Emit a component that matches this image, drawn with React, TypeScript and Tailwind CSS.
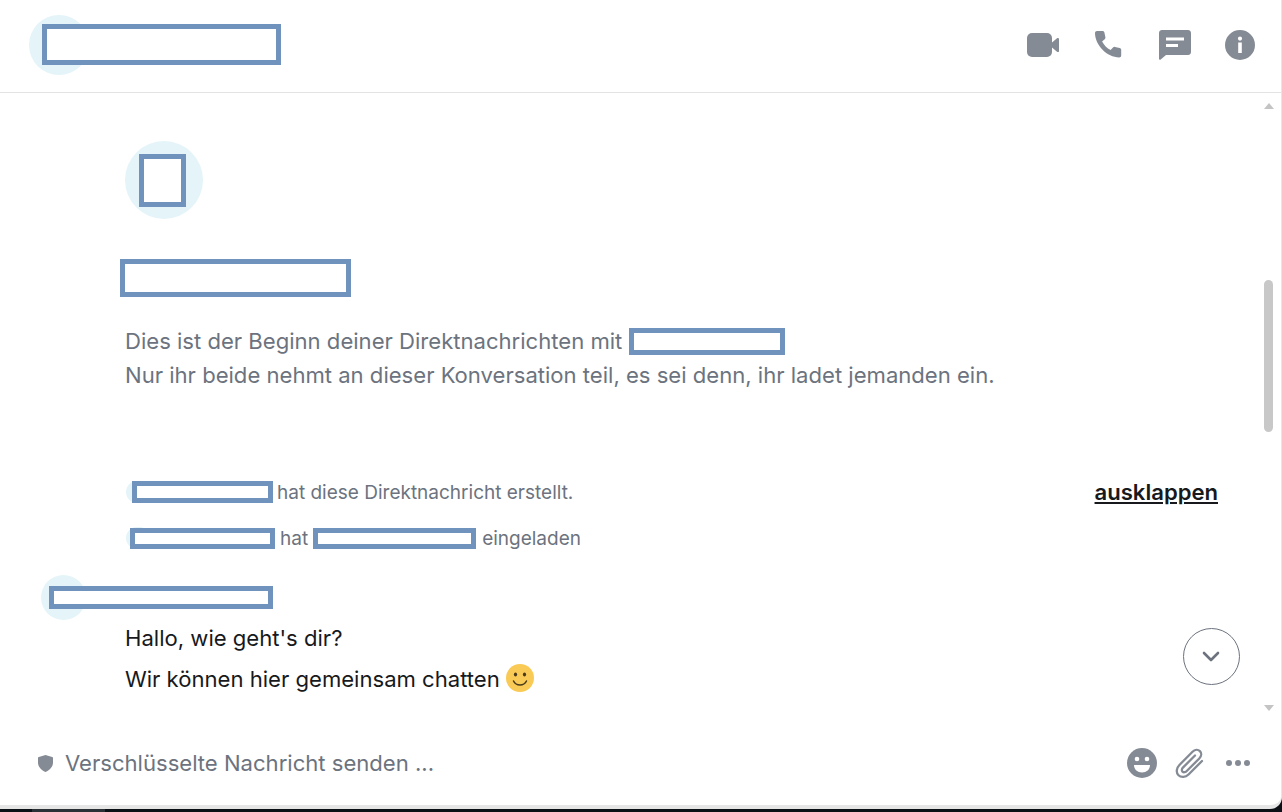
const redact = "border-[5px] border-[#7093bd] bg-white shrink-0";
const avatarBg = "rounded-full bg-[#e4f4f9] shrink-0";

function HeaderIcons() {
  return (
    <div className="flex items-center text-[#858b94]">
      <svg className="w-[32px] h-[24px]" viewBox="0 0 32 24" fill="currentColor">
        <rect x="0" y="0" width="25" height="24" rx="5" />
        <path d="M25 9.5 30 5.2c.8-.7 2-.2 2 .9v11.8c0 1.1-1.2 1.6-2 .9L25 14.500z" />
      </svg>
      <svg className="w-[30px] h-[30px] ml-[35px]" viewBox="0 0 30 30" fill="currentColor">
        <path d="M3 1h5.500c1 0 1.700.6 1.900 1.500l1 4.800c.2.8-.1 1.500-.7 2l-2.600 2.300c1.900 3.700 4.800 6.600 8.500 8.500l2.400-2.600c.6-.6 1.300-.8 2-.6l4.700 1c.9.2 1.500 1 1.500 1.900v5.600c0 1.200-.9 2-2 2C13.200 27.400 1 15.300 1 3c0-1.100.9-2 2-2z" />
      </svg>
      <svg className="w-[32px] h-[30px] ml-[35px]" viewBox="0 0 32 30" fill="currentColor">
        <path fillRule="evenodd" d="M3 0h26c1.700 0 3 1.300 3 3v19c0 1.700-1.300 3-3 3H7l-5.300 4.500c-.6.500-1.700.1-1.700-.8V3c0-1.700 1.300-3 3-3zm4 7.500v3h18v-3zm0 6.500v3h12v-3z" />
      </svg>
      <svg className="w-[30px] h-[30px] ml-[34px]" viewBox="0 0 30 30" fill="currentColor">
        <path fillRule="evenodd" d="M15 0a15 15 0 1 1 0 30a15 15 0 0 1 0-30zm-1.800 12.500v10.500h3.600V12.500zM15 6.500a2.100 2.100 0 1 0 0 4.200a2.100 2.100 0 0 0 0-4.200z" />
      </svg>
    </div>
  );
}

function Smiley() {
  return (
    <svg className="w-[28px] h-[28px] ml-[6px] mb-[4px] shrink-0" viewBox="0 0 28 28">
      <circle cx="14" cy="14" r="14" fill="#f9ca55" />
      <ellipse cx="9.500" cy="10.500" rx="1.600" ry="2.100" fill="#4a3a1c" />
      <ellipse cx="18.500" cy="10.500" rx="1.600" ry="2.100" fill="#4a3a1c" />
      <path d="M7.500 17c1.500 3 3.900 4 6.500 4s5-1 6.500-4" fill="none" stroke="#4a3a1c" strokeWidth="1.500" strokeLinecap="round" />
    </svg>
  );
}

function Composer() {
  return (
    <div className="h-[74px] flex items-center pl-[38px] pr-[31px] pb-[10px] shrink-0">
      <svg className="w-[15px] h-[17px] shrink-0" viewBox="0 0 15 17" fill="#858b94">
        <path d="M7.500 0 14.200 2c.5.100.8.500.8 1v4.500c0 4.200-3 7.600-7.500 9.500C3 15.100 0 11.700 0 7.500V3c0-.5.300-.9.800-1z" />
      </svg>
      <span className="ml-[12px] pt-[2px] text-[22.08px] text-[#6c737e]">Verschlüsselte Nachricht senden ...</span>
      <div className="ml-auto flex items-center">
        <svg className="w-[30px] h-[30px]" viewBox="0 0 30 30">
          <circle cx="15" cy="15" r="15" fill="#858b94" />
          <circle cx="10" cy="11" r="2.300" fill="#fff" />
          <circle cx="20" cy="11" r="2.300" fill="#fff" />
          <path d="M7 17h16c0 4.600-3.600 7.500-8 7.500S7 21.600 7 17z" fill="#fff" />
        </svg>
        <svg className="w-[30px] h-[31px] ml-[18px]" viewBox="0 0 30 31" fill="none" stroke="#858b94" strokeWidth="2.300" strokeLinecap="round" strokeLinejoin="round">
          <path d="M27 13 13.500 26.500c-3 3-7.500 3.200-10 .7s-2.300-7 .7-10L17.500 3.700c2.200-2.200 5.500-2.500 7.400-.6s1.600 5.200-.6 7.400L11.500 23.200c-1.200 1.200-3 1.400-4 .4s-.8-2.800.4-4L20 7.500" />
        </svg>
        <div className="flex items-center gap-[3px] ml-[21px]">
          <span className="w-[6px] h-[6px] rounded-full bg-[#858b94]" />
          <span className="w-[6px] h-[6px] rounded-full bg-[#858b94]" />
          <span className="w-[6px] h-[6px] rounded-full bg-[#858b94]" />
        </div>
      </div>
    </div>
  );
}

function ScrollTrack() {
  return (
    <div className="w-[25px] shrink-0 flex flex-col items-center relative">
      <div className="mt-[10px] w-0 h-0 border-x-[5px] border-x-transparent border-b-[6px] border-b-[#c4c4c4]" />
      <div className="mt-[171px] w-[9px] h-[152px] rounded-full bg-[#c8c8c8]" />
      <div className="mt-auto mb-[20px] w-0 h-0 border-x-[5px] border-x-transparent border-t-[6px] border-t-[#c4c4c4]" />
    </div>
  );
}

function Timeline() {
  return (
    <div className="flex-1 min-w-0 relative text-[#6c737e]">
      <div className="pl-[125px] pt-[48px]">
        <div className={`w-[78px] h-[78px] flex items-center justify-center ${avatarBg}`}>
          <div className={`w-[47px] h-[53px] -ml-[3px] ${redact}`} />
        </div>
        <div className={`w-[231px] h-[38px] mt-[40px] -ml-[5px] ${redact}`} />
        <div className="mt-[27px] text-[22.08px] leading-[35px]">
          <div className="flex items-center h-[34px]">
            <span>Dies ist der Beginn deiner Direktnachrichten mit</span>
            <div className={`w-[156px] h-[27px] ml-[7px] ${redact}`} />
          </div>
          <div>Nur ihr beide nehmt an dieser Konversation teil, es sei denn, ihr ladet jemanden ein.</div>
        </div>
      </div>
      <div className="flex items-center pl-[126px] pr-[38px] mt-[88px] h-[22px]">
        <div className={`w-[24px] h-[22px] ${avatarBg}`} />
        <div className={`w-[141px] h-[22px] -ml-[18px] ${redact}`} />
        <span className="ml-[4px] pt-[2px] text-[19px]">hat diese Direktnachricht erstellt.</span>
        <span className="ml-auto pt-[2px] text-[22.08px] font-semibold text-[#17191c] underline">ausklappen</span>
      </div>
      <div className="flex items-center pl-[126px] mt-[24px] h-[22px] text-[19px]">
        <div className={`w-[24px] h-[22px] ${avatarBg}`} />
        <div className={`w-[145px] h-[21px] -ml-[20px] ${redact}`} />
        <span className="ml-[5px] pt-[2px]">hat</span>
        <div className={`w-[163px] h-[21px] ml-[5px] ${redact}`} />
        <span className="ml-[6px] pt-[2px]">eingeladen</span>
      </div>
      <div className="flex items-center pl-[41px] mt-[26px]">
        <div className={`w-[45px] h-[45px] ${avatarBg}`} />
        <div className={`w-[224px] h-[23px] -ml-[37px] ${redact}`} />
      </div>
      <div className="pl-[125px] mt-[1px] text-[22.08px] text-[#17191c]">
        <div className="h-[36px] flex items-center">Hallo, wie geht's dir?</div>
        <div className="h-[36px] mt-[5px] flex items-center">
          Wir können hier gemeinsam chatten
          <Smiley />
        </div>
      </div>
      <button className="absolute right-[16px] top-[535px] w-[57px] h-[57px] rounded-full border border-[#6c737e] bg-white flex items-center justify-center">
        <svg className="w-[18px] h-[11px] -ml-[2px]" viewBox="0 0 18 11" fill="none" stroke="#6c737e" strokeWidth="2.600" strokeLinecap="round" strokeLinejoin="round">
          <path d="M2 2l7 7 7-7" />
        </svg>
      </button>
    </div>
  );
}

export default function App() {
  return (
    <div className="w-[1282px] h-[812px] overflow-hidden bg-[#0b0f16] flex flex-col font-['Inter','Liberation_Sans',sans-serif]">
      <div className="h-[809px] flex flex-col bg-white border-r border-b-4 border-[#e6e6e6] rounded-br-[12px] overflow-hidden">
        <header className="h-[93px] shrink-0 border-b border-[#e3e3e3] flex items-center pl-[29px] pr-[26px] pb-[3px]">
          <div className={`w-[60px] h-[60px] ${avatarBg}`} />
          <div className={`w-[239px] h-[41px] -ml-[47px] ${redact}`} />
          <div className="ml-auto">
            <HeaderIcons />
          </div>
        </header>
        <div className="flex-1 min-h-0 flex">
          <Timeline />
          <ScrollTrack />
        </div>
        <Composer />
      </div>
      <div className="flex-1 flex">
        <div className="ml-[32px] w-[73px] bg-[#2b2f36]" />
      </div>
    </div>
  );
}
